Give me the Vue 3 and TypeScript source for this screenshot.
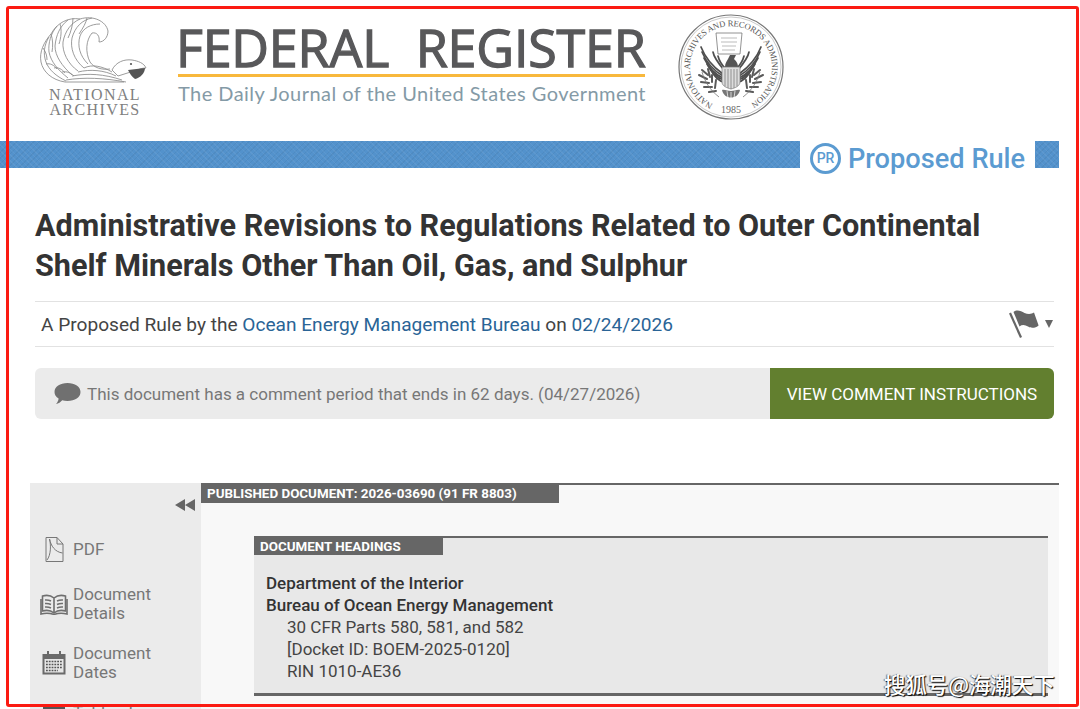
<script setup lang="ts">
interface NavItem { label: string[]; icon: string; short?: boolean }
const nav: NavItem[] = [
  { label: ['PDF'], icon: 'pdf', short: true },
  { label: ['Document', 'Details'], icon: 'book' },
  { label: ['Document', 'Dates'], icon: 'cal' },
  { label: ['Table of', 'Contents'], icon: 'toc' },
]
const feathers: string[] = [
  'M108 31C106 21 93 15 80 19C68 17 57 23 51 34C44 42 39 52 41 62C43 72 52 80 65 82',
  'M108 31C108 37 104 42 99 42C100 36 97 32 92 33C86 40 85 52 90 62C94 68 102 70 110 69',
  'M100 24C91 24 83 28 80 36C77 46 80 56 88 64',
  'M92 18C82 20 75 27 72 38C70 48 74 60 84 68',
  'M80 19C71 23 65 31 63 42C62 52 68 64 78 71',
  'M68 20C60 26 56 35 55 46C55 56 62 66 72 75',
  'M57 26C51 33 48 43 49 52C51 62 58 70 68 78',
  'M49 37C44 45 43 54 46 62C49 70 56 76 66 81',
  'M43 48C46 52 47 56 47 60M51 34C53 40 53 46 52 52M60 24C62 30 61 38 59 44M73 18C73 24 71 32 68 38M87 18C86 23 83 28 79 34',
  'M46 64C50 63 54 65 57 69M54 68C58 67 62 69 65 73M62 72C67 71 71 73 74 76',
  'M84 68C92 64 102 66 112 72M78 72C90 69 104 70 116 76M72 76C88 73 104 74 122 80',
  'M66 80C84 77 104 78 126 82M65 82H124',
]
const wing: string[] = [
  'M45 60C38 55 28 46 23 33',
  'M45 62C38 58 29 50 24 38',
  'M45 64C38 61 31 54 26 44',
  'M46 66C40 64 33 58 29 50',
  'M46 68C41 67 36 62 33 56',
  'M46 56C41 50 36 44 35 38',
  'M47 54C43 50 41 46 40 42',
]
const branch: string[] = [
  'M24 56L30 61', 'M21 61L29 65', 'M30 55L32 63', 'M23 68L31 69', 'M34 61L34 68',
  'M26 73L34 73', 'M38 66L37 74', 'M31 78L38 77',
]
</script>

<template>
  <div class="page">
    <header class="masthead">
      <div class="na">
        <svg class="na-mark" width="110" height="72" viewBox="38 14 110 72" fill="none">
          <path v-for="(d, i) in feathers" :key="i" :d="d" stroke="#8a8a8a" stroke-width="0.85" />
          <path d="M112 70C116 62 124 59 132 60C138 61 144 63 146 68C142 68 140 69 137 70L118 76Z" fill="#fff" stroke="#8a8a8a" stroke-width="0.85" />
          <path d="M128 70L145 68C145 73 140 78 135 79C132 77 130 74 128 70Z" fill="#555" />
          <circle cx="131" cy="64" r="1.1" fill="#555" />
        </svg>
        <div class="na-text">NATIONAL<br />ARCHIVES</div>
      </div>
      <div class="fr">
        <div class="fr-title">FEDERAL&nbsp; REGISTER</div>
        <div class="fr-tag">The Daily Journal of the United States Government</div>
      </div>
      <svg class="seal" width="106" height="106" viewBox="0 0 106 106" fill="none">
        <circle cx="53" cy="53" r="52" stroke="#777" stroke-width="1.2" />
        <circle cx="53" cy="53" r="50" stroke="#bbb" stroke-width="0.8" />
        <defs>
          <path id="sealArc" d="M35 90A41 41 0 1 1 71 90" />
        </defs>
        <text class="seal-ring">
          <textPath href="#sealArc" textLength="218" lengthAdjust="spacing">NATIONAL ARCHIVES AND RECORDS ADMINISTRATION</textPath>
        </text>
        <text class="seal-year" x="53" y="99" text-anchor="middle">1985</text>
        <path d="M38 19H64L62 40H40Z" fill="#fff" stroke="#777" stroke-width="0.8" />
        <path d="M43 24H59M43 28H59M44 32H58M44 36H57" stroke="#aaa" stroke-width="0.8" />
        <g v-for="flip in [false, true]" :key="String(flip)" :transform="flip ? 'translate(106 0) scale(-1 1)' : undefined">
          <path v-for="(d, i) in wing" :key="i" :d="d" stroke="#4f4f4f" stroke-width="1.7" stroke-linecap="round" />
          <path v-for="(d, i) in branch" :key="'b' + i" :d="d" stroke="#5a5a5a" stroke-width="2" stroke-linecap="round" />
          <path d="M24 58C27 68 32 76 41 83" stroke="#777" stroke-width="0.8" />
        </g>
        <path d="M47 53C47 49 49 47 50 45L52 41H58L56 45C59 48 60 50 60 53Z" fill="#555" />
        <path d="M44 53H62V68C62 72 57 74 53 75C49 74 44 72 44 68Z" fill="#ddd" stroke="#777" stroke-width="0.7" />
        <path d="M47 55V72M50 55V74M53 55V75M56 55V74M59 55V72" stroke="#888" stroke-width="0.9" />
        <path d="M44 76C46 86 60 86 62 76C60 75 56 77 53 77C50 77 46 75 44 76Z" fill="#777" />
        <path d="M49 77L50 84M53 78V85M57 77L56 84" stroke="#fff" stroke-width="0.7" />
      </svg>
    </header>

    <div class="band">
      <div class="band-fill" />
      <div class="badge">
        <span class="pr-icon">PR</span>
        <span class="badge-text">Proposed Rule</span>
      </div>
      <div class="band-end" />
    </div>

    <main class="doc">
      <h1 class="title">Administrative Revisions to Regulations Related to Outer Continental Shelf Minerals Other Than Oil, Gas, and Sulphur</h1>
      <div class="meta">
        <span>A Proposed Rule by the <a class="link">Ocean Energy Management Bureau</a> on <a class="link">02/24/2026</a></span>
        <span class="meta-actions">
          <svg width="30" height="30" viewBox="0 0 30 30">
            <path d="M0 4.600L2 3.600L13 28L11 29Z" fill="#666" />
            <path d="M4.500 3C8 0 12 2 15.500 4C19 5.500 23 5 25 3.600L29.600 16.400C27 19 22 19.600 19 17.600C16 15.600 13 15.500 10.500 17.400Z" fill="#666" />
          </svg>
          <span class="caret" />
        </span>
      </div>

      <div class="notice">
        <div class="notice-text">
          <svg width="27" height="22" viewBox="0 0 27 22">
            <path d="M13.500 0C21 0 26.500 3.600 26.500 9C26.500 14.400 21 18 13.500 18C11.500 18 9.800 17.800 8.200 17.300C6.600 19.200 4.500 20.600 2 21C3.600 19.400 4.400 17.600 4.600 15.600C2 14 .5 11.700 .5 9C.5 3.600 6 0 13.500 0Z" fill="#707070" />
          </svg>
          <span>This document has a comment period that ends in 62 days. (04/27/2026)</span>
        </div>
        <button class="cta" type="button">VIEW COMMENT INSTRUCTIONS</button>
      </div>
    </main>

    <section class="reader">
      <aside class="side">
        <div class="collapse">
          <svg width="20" height="12" viewBox="0 0 20 12"><path d="M10 0V12L0 6ZM20 0V12L10 6Z" fill="#666" /></svg>
        </div>
        <ul class="side-list">
          <li v-for="item in nav" :key="item.icon" class="side-item" :class="{ short: item.short }">
            <span class="side-icon">
              <svg v-if="item.icon === 'pdf'" width="19" height="25" viewBox="0 0 19 25" fill="none" stroke="#777" stroke-width="1">
                <path d="M1 .5H12L18 7V24.500H1Z" /><path d="M12 .5V7H18" /><path d="M2 23C6 18 6 8 4.500 2C6 9 10 15 17.500 16" />
              </svg>
              <svg v-else-if="item.icon === 'book'" width="28" height="21" viewBox="0 0 28 21" fill="none" stroke="#6f6f6f" stroke-width="1.6">
                <path d="M14 4C11 1.500 6 1 2.500 2V17C6 16 11 16.500 14 19C17 16.500 22 16 25.500 17V2C22 1 17 1.500 14 4V19" />
                <path d="M1 5V20C5 19 10 19 14 20.500C18 19 23 19 27 20V5" />
                <path d="M5 6C7 5.800 9 6 11 7M5 9.500C7 9.300 9 9.500 11 10.500M5 13C7 12.800 9 13 11 14M17 7C19 6 21 5.800 23 6M17 10.500C19 9.500 21 9.300 23 9.500M17 14C19 13 21 12.800 23 13" />
              </svg>
              <svg v-else-if="item.icon === 'cal'" width="24" height="24" viewBox="0 0 24 24">
                <rect x=".5" y="3" width="23" height="20.500" fill="#6a6a6a" />
                <rect x="2.500" y="8" width="19" height="13.500" fill="#e6e6e6" />
                <path d="M6 0V6M18 0V6" stroke="#6a6a6a" stroke-width="2" />
                <path d="M4 10.500H20M4 13.500H20M4 16.500H20M4 19.500H16" stroke="#555" stroke-width="1.600" stroke-dasharray="1.800 1" />
              </svg>
              <svg v-else width="24" height="32" viewBox="0 0 24 32"><rect x="1" y="0" width="22" height="32" fill="#555" /></svg>
            </span>
            <span class="side-label"><span v-for="line in item.label" :key="line" class="side-line">{{ line }}</span></span>
          </li>
        </ul>
      </aside>
      <div class="content">
        <div class="tag">PUBLISHED DOCUMENT: 2026-03690 (91 FR 8803)</div>
        <div class="headings">
          <div class="headings-tag">DOCUMENT HEADINGS</div>
          <div class="headings-body">
            <p class="agency">Department of the Interior</p>
            <p class="agency">Bureau of Ocean Energy Management</p>
            <p class="sub">30 CFR Parts 580, 581, and 582</p>
            <p class="sub">[Docket ID: BOEM-2025-0120]</p>
            <p class="sub">RIN 1010-AE36</p>
          </div>
        </div>
      </div>
    </section>

    <div class="frame" />
    <div class="watermark">搜狐号@海潮天下</div>
  </div>
</template>

<style>
html, body { margin: 0; background: #fff; }
</style>

<style scoped>
.page {
  position: relative;
  width: 1080px;
  height: 709px;
  overflow: hidden;
  background: #fff;
  font-family: Roboto, "Liberation Sans", sans-serif;
  color: #333;
}
.masthead {
  display: flex;
  align-items: flex-start;
  height: 141px;
  padding: 0 0 0 38px;
  box-sizing: border-box;
}
.na { width: 110px; padding-top: 14px; }
.na-mark { display: block; }
.na-text {
  margin: 1px 0 0 2px;
  width: 110px;
  text-align: center;
  font: 16px/15px "Liberation Serif", serif;
  letter-spacing: 1.400px;
  color: #808080;
}
.fr { margin: 20px 0 0 30px; width: 467px; }
.fr-title {
  margin-left: -2px;
  font: 400 52px/54px "Open Sans", sans-serif;
  -webkit-text-stroke: 1.300px #58585a;
  letter-spacing: -0.200px;
  color: #58585a;
  white-space: nowrap;
  height: 54px;
}
.fr-tag {
  border-top: 3px solid #f8b83c;
  padding-top: 3px;
  font: 20px/27px Lato, sans-serif;
  color: #849aa6;
  white-space: nowrap;
  letter-spacing: 0.450px;
}
.seal { margin: 14px 0 0 33px; flex: none; }
.seal-ring { font: 8.600px "Liberation Serif", serif; fill: #555; }
.seal-year { font: 10px "Liberation Serif", serif; fill: #666; }
.band { display: flex; height: 27px; margin-right: 21px; }
.band-fill, .band-end {
  background-color: #5392cc;
  background-image:
    repeating-linear-gradient(45deg, rgba(255,255,255,.06) 0 1px, transparent 1px 4px),
    repeating-linear-gradient(-45deg, rgba(0,0,0,.05) 0 1px, transparent 1px 4px);
}
.band-fill { width: 800px; }
.band-end { width: 24px; margin-left: auto; }
.badge { display: flex; align-items: center; margin-left: 10px; height: 34px; color: #5b9bd1; }
.pr-icon {
  box-sizing: border-box;
  width: 31px;
  height: 31px;
  border: 3px solid #5b9bd1;
  border-radius: 50%;
  display: flex;
  align-items: center;
  justify-content: center;
  font-size: 14px;
  font-weight: 500;
  margin-right: 7px;
}
.badge-text { padding-top: 2px; font-size: 27.200px; font-weight: 500; white-space: nowrap; }
.doc { padding: 0 26px 0 35px; }
.title {
  margin: 38px 0 15px;
  font-size: 30.600px;
  line-height: 40px;
  font-weight: 700;
  color: #333;
}
.meta {
  display: flex;
  align-items: center;
  justify-content: space-between;
  box-sizing: border-box;
  height: 46px;
  padding-left: 6px;
  border-top: 1px solid #e2e2e2;
  border-bottom: 1px solid #e2e2e2;
  font-size: 19.100px;
  color: #444;
}
.link { color: #2a6496; }
.meta-actions { display: flex; align-items: center; gap: 6px; padding-right: 1px; }
.meta-actions svg { display: block; }
.caret {
  width: 0;
  height: 0;
  border-left: 4.500px solid transparent;
  border-right: 4.500px solid transparent;
  border-top: 8px solid #666;
}
.notice {
  display: flex;
  height: 51px;
  margin-top: 21px;
  background: #ebebeb;
  border-radius: 6px;
  overflow: hidden;
}
.notice-text {
  flex: 1;
  display: flex;
  align-items: center;
  gap: 6px;
  padding-left: 19px;
  font-size: 17px;
  color: #777;
  white-space: nowrap;
}
.cta {
  width: 284px;
  border: 0;
  background: #627f2f;
  color: #fff;
  font: 17px Roboto, sans-serif;
  padding: 0;
  white-space: nowrap;
}
.reader {
  display: flex;
  margin: 64px 21px 0 30px;
  height: 226px;
}
.side { width: 171px; background: #ebebeb; flex: none; }
.collapse { display: flex; justify-content: flex-end; padding: 16px 6px 0 0; }
.side-list { list-style: none; margin: 24px 0 0; padding: 0; }
.side-item { display: flex; align-items: center; height: 38px; margin-bottom: 21px; color: #777; font-size: 17px; line-height: 19px; }
.side-item.short { height: 29px; }
.side-icon { width: 38px; margin-left: 5px; display: flex; justify-content: center; flex: none; }
.side-icon svg { display: block; }
.side-line { display: block; }
.content {
  flex: 1;
  box-sizing: border-box;
  border-top: 2px solid #666;
  background: #f8f8f8;
  padding-right: 11px;
}
.tag {
  width: 358px;
  box-sizing: border-box;
  height: 18px;
  padding-left: 6px;
  background: #666;
  color: #fff;
  font-size: 13.400px;
  font-weight: 700;
  line-height: 17px;
  white-space: nowrap;
}
.headings {
  margin: 33px 0 0 53px;
  border-top: 2px solid #666;
  border-bottom: 3px solid #666;
  background: #e8e8e8;
  height: 160px;
  box-sizing: border-box;
}
.headings-tag {
  width: 189px;
  box-sizing: border-box;
  height: 17px;
  padding-left: 6px;
  background: #666;
  color: #fff;
  font-size: 13.400px;
  font-weight: 700;
  line-height: 17px;
}
.headings-body { padding: 17px 0 0 12px; font-size: 17px; line-height: 22px; color: #333; }
.headings-body p { margin: 0; }
.agency { font-weight: 500; }
.sub { padding-left: 21px; color: #444; }
.frame {
  position: absolute;
  left: 6px;
  top: 6px;
  width: 1073px;
  height: 701px;
  box-sizing: border-box;
  border: 3px solid #fb1a12;
  border-radius: 3px;
  pointer-events: none;
}
.watermark {
  position: absolute;
  left: 884px;
  top: 670px;
  font: 500 21.400px/28px "Noto Sans CJK SC", sans-serif;
  color: #fff;
  white-space: nowrap;
  text-shadow: 1px 1px 1px #000, -1px 0 1px rgba(0,0,0,.5);
}
</style>
